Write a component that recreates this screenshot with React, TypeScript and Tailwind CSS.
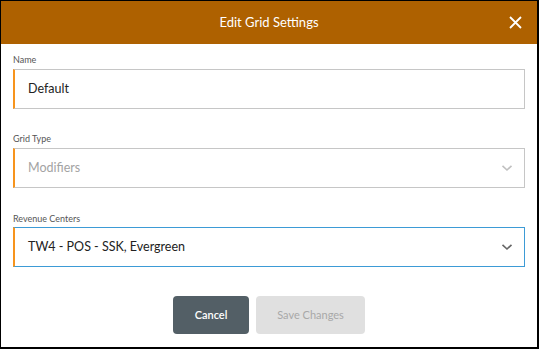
import React from "react";

function Chevron({ color }: { color: string }) {
  return (
    <svg width="12" height="8" viewBox="0 0 12 8" fill="none">
      <path d="M1.5 1.8 L6 6 L10.5 1.8" stroke={color} strokeWidth="1.6" />
    </svg>
  );
}

export default function App() {
  return (
    <div
      className="w-[539px] h-[349px] bg-white border-l border-t border-r-2 border-b-2 border-black flex flex-col overflow-hidden"
      style={{ fontFamily: "Lato, 'Open Sans', sans-serif" }}
    >
      <div className="h-[43px] bg-[#ae6100] flex items-center justify-center relative shrink-0">
        <span className="text-white text-[13px]">Edit Grid Settings</span>
        <svg
          className="absolute right-[15px] top-[15px]"
          width="13"
          height="13"
          viewBox="0 0 13 13"
        >
          <path d="M1 1 L12 12 M12 1 L1 12" stroke="white" strokeWidth="1.8" />
        </svg>
      </div>
      <div className="px-3 flex flex-col">
        <label className="mt-[9px] mb-[2px] text-[9px] leading-[14px] text-[#555]">Name</label>
        <div className="h-[40px] border border-[#c6c6c6] border-l-2 border-l-[#f7941d] flex items-center pl-[13px] text-[12.5px] text-[#222]">
          Default
        </div>
        <label className="mt-[23px] mb-[2px] text-[9px] leading-[14px] text-[#555]">Grid Type</label>
        <div className="h-[40px] border border-[#c6c6c6] border-l-2 border-l-[#f7941d] flex items-center justify-between pl-[13px] pr-[11px] text-[12.5px] text-[#a3a3a3]">
          <span>Modifiers</span>
          <Chevron color="#c0c0c0" />
        </div>
        <label className="mt-[24px] mb-[1px] text-[9px] leading-[14px] text-[#555]">Revenue Centers</label>
        <div className="h-[40px] border border-[#3d9bd6] border-l-2 border-l-[#f7941d] flex items-center justify-between pl-[13px] pr-[11px] text-[12.5px] text-[#222]">
          <span>TW4 - POS - SSK, Evergreen</span>
          <Chevron color="#666" />
        </div>
        <div className="mt-[29px] flex justify-center gap-[7px]">
          <button className="w-[76px] h-[38px] rounded-[4px] bg-[#535f66] text-white text-[11px] font-semibold">
            Cancel
          </button>
          <button className="w-[109px] h-[38px] rounded-[4px] bg-[#e0e0e0] text-[#a8a8a8] text-[11px]">
            Save Changes
          </button>
        </div>
      </div>
    </div>
  );
}
